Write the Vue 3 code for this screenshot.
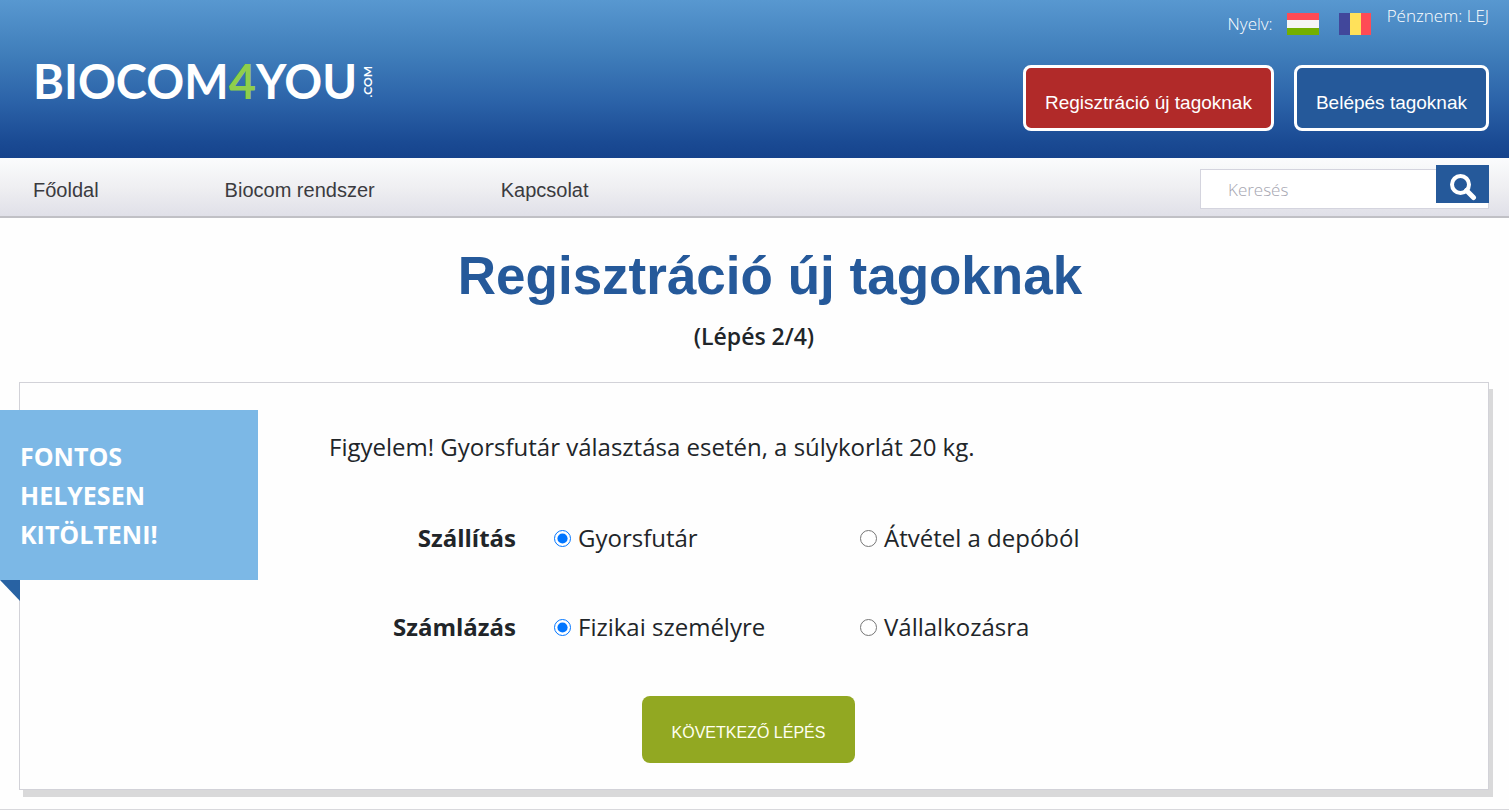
<template>
  <div class="page">
    <header class="header">
      <a class="logo" href="#" aria-label="Biocom4you.com">
        <span class="logo-name">BIOCOM<span class="logo-four">4</span>YOU</span>
        <span class="logo-domain">.COM</span>
      </a>

      <div class="header-side">
        <div class="settings">
          <div class="languages">
            <span>Nyelv:</span>
            <button class="flag" type="button" aria-label="Magyar">
              <svg width="32" height="22" viewBox="0 0 32 22">
                <rect width="32" height="8" fill="#ff4b55" />
                <rect y="7" width="32" height="8" fill="#f5f5f5" />
                <rect y="15" width="32" height="7" fill="#73af00" />
              </svg>
            </button>
            <button class="flag" type="button" aria-label="Română">
              <svg width="32" height="22" viewBox="0 0 32 22">
                <rect width="11" height="22" fill="#41479b" />
                <rect x="11" width="11" height="22" fill="#ffe15a" />
                <rect x="22" width="10" height="22" fill="#ff4b55" />
              </svg>
            </button>
          </div>
          <span class="currency">Pénznem: LEJ</span>
        </div>

        <div class="account">
          <a class="account-button register" href="#">Regisztráció új tagoknak</a>
          <a class="account-button" href="#">Belépés tagoknak</a>
        </div>
      </div>
    </header>

    <nav class="navbar">
      <div class="menu">
        <a v-for="item in menu" :key="item" href="#">{{ item }}</a>
      </div>
      <form class="search" @submit.prevent>
        <input v-model="query" type="text" placeholder="Keresés" aria-label="Keresés" />
        <button type="submit" aria-label="Keresés">
          <svg width="28" height="28" viewBox="0 0 28 28" fill="none" stroke="#fff" stroke-width="4">
            <circle cx="11.5" cy="11.5" r="8.5" />
            <path d="M17.5 17.5 L24.5 24.5" stroke-width="5" stroke-linecap="round" />
          </svg>
        </button>
      </form>
    </nav>

    <main class="content">
      <h1>Regisztráció új tagoknak</h1>
      <p class="step">(Lépés 2/4)</p>

      <section class="panel">
        <div class="ribbon">
          FONTOS<br />
          HELYESEN<br />
          KITÖLTENI!
        </div>

        <form @submit.prevent>
          <p class="notice">Figyelem! Gyorsfutár választása esetén, a súlykorlát 20 kg.</p>

          <div
            v-for="group in groups"
            :key="group.name"
            class="row"
            role="radiogroup"
            :aria-labelledby="group.name"
          >
            <strong :id="group.name">{{ group.label }}</strong>
            <label v-for="option in group.options" :key="option">
              <input v-model="selected[group.name]" type="radio" :name="group.name" :value="option" />
              {{ option }}
            </label>
          </div>

          <div class="actions">
            <button class="next" type="submit">KÖVETKEZŐ LÉPÉS</button>
          </div>
        </form>
      </section>
    </main>

    <footer class="footer"></footer>
  </div>
</template>

<script setup>
import { reactive, ref } from 'vue';

const menu = ['Főoldal', 'Biocom rendszer', 'Kapcsolat'];

const groups = [
  { name: 'shipping', label: 'Szállítás', options: ['Gyorsfutár', 'Átvétel a depóból'] },
  { name: 'billing', label: 'Számlázás', options: ['Fizikai személyre', 'Vállalkozásra'] }
];

const query = ref('');

const selected = reactive({
  shipping: 'Gyorsfutár',
  billing: 'Fizikai személyre'
});
</script>

<style>
body {
  background: #fefefe;
}
</style>

<style scoped>
.page {
  font-family: "Open Sans", "Noto Sans", sans-serif;
  color: #212529;
  overflow: hidden;
}

.page *,
.page {
  box-sizing: border-box;
}

a {
  color: inherit;
  text-decoration: none;
}

button {
  cursor: pointer;
}

.header {
  display: flex;
  justify-content: space-between;
  height: 158px;
  padding: 0 20px 0 33px;
  background: linear-gradient(#5898d0, #3f7dba 35%, #2b62a8 65%, #1a4a93 90%, #16438c);
  color: #fff;
}

.logo {
  display: flex;
  align-items: center;
  gap: 5px;
  height: 33px;
  margin-top: 65px;
  font-family: Lato, sans-serif;
}

.logo-name {
  font-size: 47px;
  line-height: 33px;
  font-weight: 700;
}

.logo-four {
  color: #8fce4b;
}

.logo-domain {
  font-size: 12px;
  line-height: 12px;
  font-weight: 700;
  writing-mode: vertical-rl;
  transform: rotate(180deg);
}

.header-side {
  display: flex;
  flex-direction: column;
  align-items: flex-end;
}

.settings {
  display: flex;
  align-items: flex-start;
  gap: 16px;
  height: 65px;
  padding-top: 4px;
  font-size: 17px;
  line-height: 24px;
  font-weight: 300;
}

.languages {
  display: flex;
  align-items: center;
  padding-top: 8px;
}

.flag {
  height: 22px;
  margin-left: 20px;
  padding: 0;
  border: 0;
  background: none;
}

.languages span + .flag {
  margin-left: 14px;
}

.flag svg {
  display: block;
}

.account {
  display: flex;
  gap: 20px;
}

.account-button {
  height: 66px;
  padding: 23px 19px 13px;
  border: 3px solid #fff;
  border-radius: 8px;
  background: #25599a;
  font: 19px/24px "Liberation Sans", Arial, sans-serif;
}

.register {
  background: #b12a29;
}

.navbar {
  display: flex;
  justify-content: space-between;
  align-items: center;
  height: 60px;
  padding: 0 20px 0 33px;
  border-bottom: 2px solid #c0c0c5;
  background: linear-gradient(#fbfcfd, #efeff2 50%, #e0e0e8);
}

.menu {
  display: flex;
  gap: 126px;
  padding-top: 6px;
  font: 20px/24px "Liberation Sans", Arial, sans-serif;
  color: #3b3b3f;
}

.search {
  position: relative;
  width: 289px;
  padding-top: 4px;
}

.search input {
  display: block;
  width: 100%;
  height: 40px;
  padding: 0 60px 0 27px;
  border: 1px solid #d4d4de;
  background: #fff;
  font: 300 17px "Open Sans", sans-serif;
}

.search input::placeholder {
  color: #a5a5b0;
}

.search button {
  position: absolute;
  top: 0;
  right: 0;
  display: flex;
  align-items: center;
  justify-content: center;
  width: 53px;
  height: 38px;
  padding: 6px 0 0;
  border: 0;
  background: #25599a;
}

.content {
  padding: 24px 20px 12px 19px;
}

h1 {
  margin: 0;
  padding-left: 32px;
  font: 700 53px/68px "Liberation Sans", Arial, sans-serif;
  color: #25599a;
  text-align: center;
}

.step {
  margin: 9px 0 29px;
  font-size: 23px;
  line-height: 34px;
  font-weight: 600;
  text-align: center;
}

.panel {
  position: relative;
  padding: 44px 0 26px;
  border: 1px solid #d2d2d8;
  background: #fefefe;
  box-shadow: 4px 7px 0 #d9d9da;
}

.ribbon {
  position: absolute;
  top: 27px;
  left: -20px;
  width: 258px;
  padding: 27px 20px 26px;
  background: #7cb8e6;
  color: #fff;
  font-size: 25px;
  line-height: 39px;
  font-weight: 700;
}

/* folded corner behind the panel edge */
.ribbon::after {
  content: "";
  position: absolute;
  top: 100%;
  left: 0;
  width: 20px;
  height: 21px;
  background: #2862a3;
  clip-path: polygon(0 0, 100% 0, 100% 100%);
}

.notice {
  margin: 0 0 51px 309px;
  font-size: 24px;
  line-height: 40px;
}

.row {
  display: grid;
  grid-template-columns: 187px 268px 1fr;
  column-gap: 38px;
  margin: 0 0 49px 309px;
  font-size: 24px;
  line-height: 40px;
}

.row strong {
  text-align: right;
}

.row label {
  display: flex;
  align-items: center;
  gap: 7px;
  white-space: nowrap;
}

.row input {
  width: 17px;
  height: 17px;
  margin: 0;
  accent-color: #0075ff;
}

.actions {
  padding-right: 11px;
  text-align: center;
}

.next {
  width: 213px;
  height: 67px;
  padding: 7px 0 0;
  border: 0;
  border-radius: 8px;
  background: #92a822;
  color: #fffff0;
  font: 16px "Liberation Sans", Arial, sans-serif;
}

.footer {
  margin-top: 7px;
  border-top: 1px solid #d8d8dc;
}
</style>
